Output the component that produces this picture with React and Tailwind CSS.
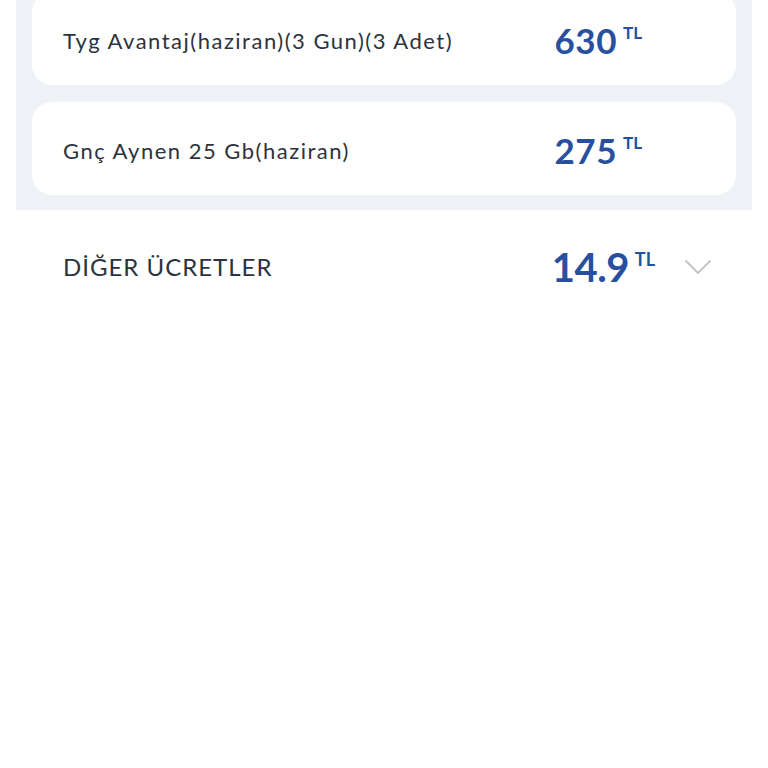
import React from 'react';
import { ChevronDown } from 'lucide-react';

const packages = [
  { id: 'tyg', label: 'Tyg Avantaj(haziran)(3 Gun)(3 Adet)', price: '630' },
  { id: 'gnc', label: 'Gnç Aynen 25 Gb(haziran)', price: '275' },
];

function Price({ value, big }) {
  return (
    <div className="flex items-start">
      <span
        className={`font-bold text-[#28509f] leading-none ${big ? 'text-[40px] tracking-[-0.5px]' : 'text-[35px] tracking-[0.5px]'}`}
      >
        {value}
      </span>
      <span
        className={`ml-[6px] font-bold leading-none text-[#28509f] ${big ? 'mt-[3px] text-[18px]' : 'mt-[1px] text-[17px]'}`}
      >
        TL
      </span>
    </div>
  );
}

export default function App() {
  return (
    <div className="min-h-screen bg-white" style={{ fontFamily: 'Lato, "Noto Sans", sans-serif' }}>
      {/* Paket listesi */}
      <div className="mx-4 overflow-hidden bg-[#eef1f5] px-4 pb-[15px]">
        <div className="flex flex-col gap-[17px] -mt-[8px]">
          {packages.map((p) => (
            <div
              key={p.id}
              className="flex h-[93px] items-center justify-between rounded-[20px] bg-white pl-[31px] pr-[94px] pt-[3px]"
            >
              <span className="text-[22px] tracking-[1.5px] text-[#2b333e]">{p.label}</span>
              <Price value={p.price} />
            </div>
          ))}
        </div>
      </div>

      {/* Diğer ücretler */}
      <div className="mx-4 flex h-[114px] items-center justify-between pl-[47px] pr-[30px]">
        <span className="text-[24px] tracking-[1px] text-[#2b333e] uppercase">DİĞER ÜCRETLER</span>
        <div className="flex items-center gap-[19px]">
          <Price value="14.9" big />
          <ChevronDown size={48} strokeWidth={1} className="text-[#c3c6ca]" />
        </div>
      </div>
    </div>
  );
}
